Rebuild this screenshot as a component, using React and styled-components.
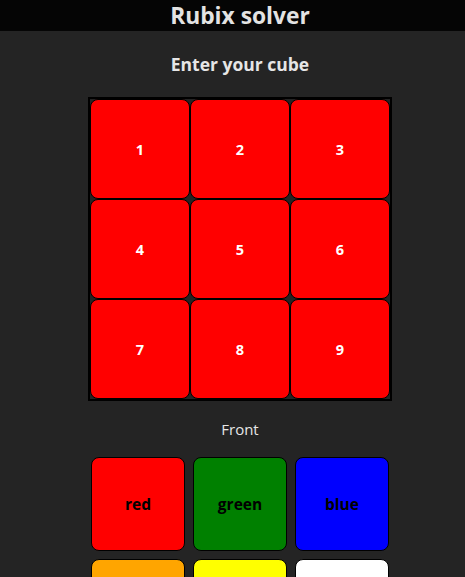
import React from "react";
import styled, { createGlobalStyle } from "styled-components";

const Global = createGlobalStyle`
  html, body {
    margin: 0;
    padding: 0;
    background: #242424;
    overflow: hidden;
  }
  body {
    font-family: "Open Sans", "Noto Sans", sans-serif;
    color: #e6e6e6;
  }
`;

const Page = styled.div`
  min-width: 480px;
  min-height: 577px;
  display: flex;
  flex-direction: column;
  background: #242424;
`;

const Header = styled.header`
  height: 31px;
  background: #050505;
  display: flex;
  justify-content: center;
  align-items: center;
`;

const Title = styled.h1`
  margin: 0;
  font-size: 22.8px;
  font-weight: 700;
  line-height: 31px;
  color: #e3e3e3;
`;

const Main = styled.main`
  display: flex;
  flex-direction: column;
  align-items: center;
`;

const Heading = styled.h2`
  margin: 20px 0 0;
  height: 26px;
  font-size: 17.5px;
  line-height: 26px;
  font-weight: 700;
  color: #e6e6e6;
`;

const Face = styled.div`
  margin-top: 20px;
  display: grid;
  grid-template-columns: repeat(3, 100px);
  grid-template-rows: repeat(3, 100px);
  border: 2px solid #000;
`;

const Cell = styled.button`
  box-sizing: border-box;
  width: 100px;
  height: 100px;
  margin: 0;
  padding: 0;
  border: 1px solid #000;
  border-radius: 8px;
  background: ${(p) => p.$color};
  color: #fff;
  font-family: "Open Sans", "Noto Sans", sans-serif;
  font-size: 14.5px;
  font-weight: 700;
  display: flex;
  align-items: center;
  justify-content: center;
`;

const FaceLabel = styled.div`
  margin-top: 17px;
  height: 22px;
  line-height: 22px;
  font-size: 15px;
  color: #e6e6e6;
`;

const Palette = styled.div`
  margin-top: 17px;
  display: grid;
  grid-template-columns: repeat(3, 94px);
  grid-auto-rows: 94px;
  column-gap: 8px;
  row-gap: 8px;
`;

const Swatch = styled.button`
  box-sizing: border-box;
  width: 94px;
  height: 94px;
  margin: 0;
  padding: 0;
  border: 1px solid #000;
  border-radius: 8px;
  background: ${(p) => p.$color};
  color: #000;
  font-family: "Open Sans", "Noto Sans", sans-serif;
  font-size: 15.5px;
  font-weight: 700;
  display: flex;
  align-items: center;
  justify-content: center;
`;

const cells = [1, 2, 3, 4, 5, 6, 7, 8, 9];
const colors = [
  ["red", "#ff0000"],
  ["green", "#008000"],
  ["blue", "#0000ff"],
  ["orange", "#ffa500"],
  ["yellow", "#ffff00"],
  ["white", "#ffffff"],
];

export default function App() {
  return (
    <Page>
      <Global />
      <Header>
        <Title>Rubix solver</Title>
      </Header>
      <Main>
        <Heading>Enter your cube</Heading>
        <Face>
          {cells.map((n) => (
            <Cell key={n} $color="#ff0000">
              {n}
            </Cell>
          ))}
        </Face>
        <FaceLabel>Front</FaceLabel>
        <Palette>
          {colors.map(([name, c]) => (
            <Swatch key={name} $color={c}>
              {name}
            </Swatch>
          ))}
        </Palette>
      </Main>
    </Page>
  );
}
